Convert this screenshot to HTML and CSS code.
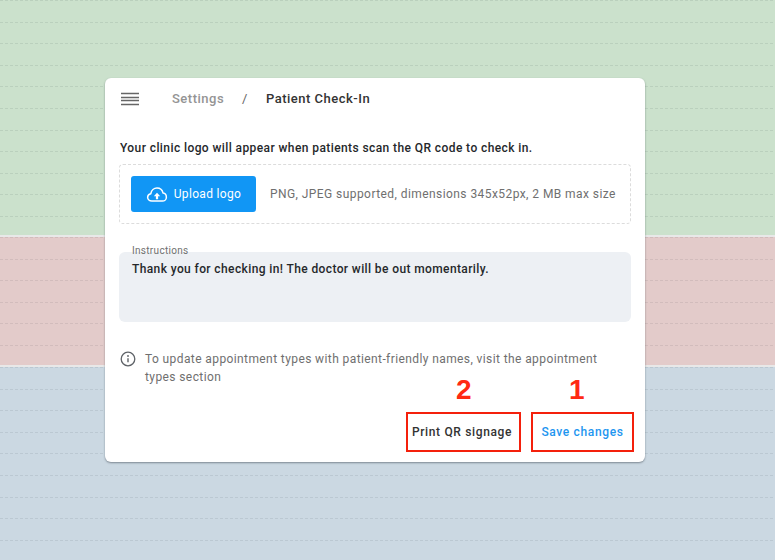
FILE: index.html
```html
<!DOCTYPE html>
<html lang="en">
<head>
<meta charset="utf-8">
<title>Patient Check-In</title>
<link rel="stylesheet" href="styles.css">
</head>
<body>
<div class="bands">
  <div class="band band-green"></div>
  <div class="band band-red"></div>
  <div class="band band-blue"></div>
</div>
<main class="card">
  <header class="crumbs">
    <svg class="menu" width="18" height="14" viewBox="0 0 18 14"><path d="M0 1.500h18M0 5.500h18M0 8.500h18M0 12.500h18" stroke="#666" stroke-width="1.700"/></svg>
    <span class="crumb-muted">Settings</span>
    <span class="crumb-sep">/</span>
    <span class="crumb-current">Patient Check-In</span>
  </header>
  <p class="lead">Your clinic logo will appear when patients scan the QR code to check in.</p>
  <div class="dropzone">
    <button class="upload">
      <svg width="22" height="15" viewBox="0 0 22 16"><path d="M5.500 15C3 15 1 13.300 1 11c0-2 1.400-3.600 3.400-3.900C5 3.500 7.800 1 11 1c3.100 0 5.700 2.200 6.400 5.300 2.100.3 3.600 2.200 3.600 4.500 0 2.400-1.900 4.200-4.300 4.200z" fill="none" stroke="#fff" stroke-width="1.600"/><path d="M11 6.200l3.400 3.600h-2.200v3.200H9.800V9.800H7.600z" fill="#fff"/></svg>
      <span>Upload logo</span>
    </button>
    <span class="hint">PNG, JPEG supported, dimensions 345x52px, 2 MB max size</span>
  </div>
  <div class="field">
    <span class="field-label">Instructions</span>
    <div class="field-box">Thank you for checking in! The doctor will be out momentarily.</div>
  </div>
  <div class="note">
    <svg class="info" width="16" height="16" viewBox="0 0 16 16"><circle cx="8" cy="8" r="6.800" fill="none" stroke="#5f6368" stroke-width="1.300"/><path d="M8 7.300v4" stroke="#5f6368" stroke-width="1.400"/><circle cx="8" cy="5" r=".9" fill="#5f6368"/></svg>
    <div class="note-text">
      <span class="note-line">To update appointment types with patient-friendly names, visit the appointment</span>
      <span class="note-line">types section</span>
    </div>
  </div>
  <footer class="actions">
    <div class="action">
      <span class="step step-two">2</span>
      <button class="btn btn-dark">Print QR signage</button>
    </div>
    <div class="action">
      <span class="step step-one">1</span>
      <button class="btn btn-blue">Save changes</button>
    </div>
  </footer>
</main>
</body>
</html>
```
FILE: styles.css
```css
* { box-sizing: border-box; }
html, body { margin: 0; height: 100%; overflow: hidden; }
body { position: relative; width: 775px; height: 560px; font-family: Roboto, "Liberation Sans", sans-serif; background: #e8e8e8; }
.bands { display: flex; flex-direction: column; gap: 2px; height: 560px; }
.band { position: relative; }
.band::before { content: ""; position: absolute; inset: 0;
  background: repeating-linear-gradient(180deg, var(--line) 0 1px, transparent 1px 21.6px);
  -webkit-mask: repeating-linear-gradient(90deg, #000 0 3px, transparent 3px 5px);
  mask: repeating-linear-gradient(90deg, #000 0 3px, transparent 3px 5px); }
.band-green { height: 235px; background-color: #cbe1cc; --line: #bad0bd; }
.band-red { height: 128px; background-color: #e3cbca; --line: #d2bcbc; }
.band-blue { flex: 1; background-color: #cbd8e2; --line: #bbc8d2; }
.card { position: absolute; left: 105px; top: 78px; width: 540px; height: 384px; padding: 0 14px 10px; background: #fff; border-radius: 6px; box-shadow: 0 1px 2px rgba(60,70,80,.55); display: flex; flex-direction: column; }
.crumbs { display: flex; align-items: center; height: 41px; font-size: 13px; font-weight: 500; letter-spacing: .5px; }
.menu { margin: 0 33px 0 2px; }
.crumb-muted { color: #949494; }
.crumb-sep { margin: 0 18px; color: #666; font-weight: 400; }
.crumb-current { color: #333; }
.lead { margin: 21px 0 0; padding-left: 1px; font-size: 12px; line-height: 16px; font-weight: 500; letter-spacing: .41px; color: #25282b; }
.dropzone { display: flex; align-items: center; gap: 14px; margin-top: 8px; height: 60px; padding: 0 11px; border: 1px dashed #dcdcdc; border-radius: 4px; }
.upload { display: flex; align-items: center; justify-content: center; gap: 6px; width: 125px; height: 36px; border: 0; border-radius: 3px; background: #1196f5; color: #fff; font: 400 12px Roboto, sans-serif; letter-spacing: .33px; }
.hint { font-size: 12px; letter-spacing: .43px; color: #6f6f6f; white-space: nowrap; }
.field { position: relative; margin-top: 28px; }
.field-label { position: absolute; left: 13px; top: -7px; font-size: 10px; line-height: 12px; letter-spacing: .3px; color: #707070; }
.field-box { height: 70px; padding: 9px 13px; border-radius: 6px; background: #edf0f4; font-size: 12px; line-height: 16px; font-weight: 500; letter-spacing: .39px; color: #25282b; }
.note { display: flex; gap: 9px; margin-top: 28px; }
.info { flex: none; margin: 1px 0 0 1px; }
.note-text { display: flex; flex-direction: column; align-items: flex-start; }
.note-line { font-size: 12px; line-height: 18px; letter-spacing: .4px; color: #6f6f6f; white-space: nowrap; }
.actions { display: flex; justify-content: flex-end; gap: 10px; margin: auto -3px 0 0; }
.action { position: relative; }
.step { position: absolute; top: -32px; font: 700 28px/20px "Liberation Sans", sans-serif; color: #ff2a12; }
.step-two { left: 50px; }
.step-one { left: 38px; }
.btn { display: block; height: 40px; padding: 0; border: 2px solid #f4200c; background: #fff; font: 500 12px Roboto, sans-serif; letter-spacing: .65px; white-space: nowrap; }
.btn-dark { color: #333; width: 115px; padding-right: 3px; }
.btn-blue { color: #1e96f0; width: 103px; }
```
